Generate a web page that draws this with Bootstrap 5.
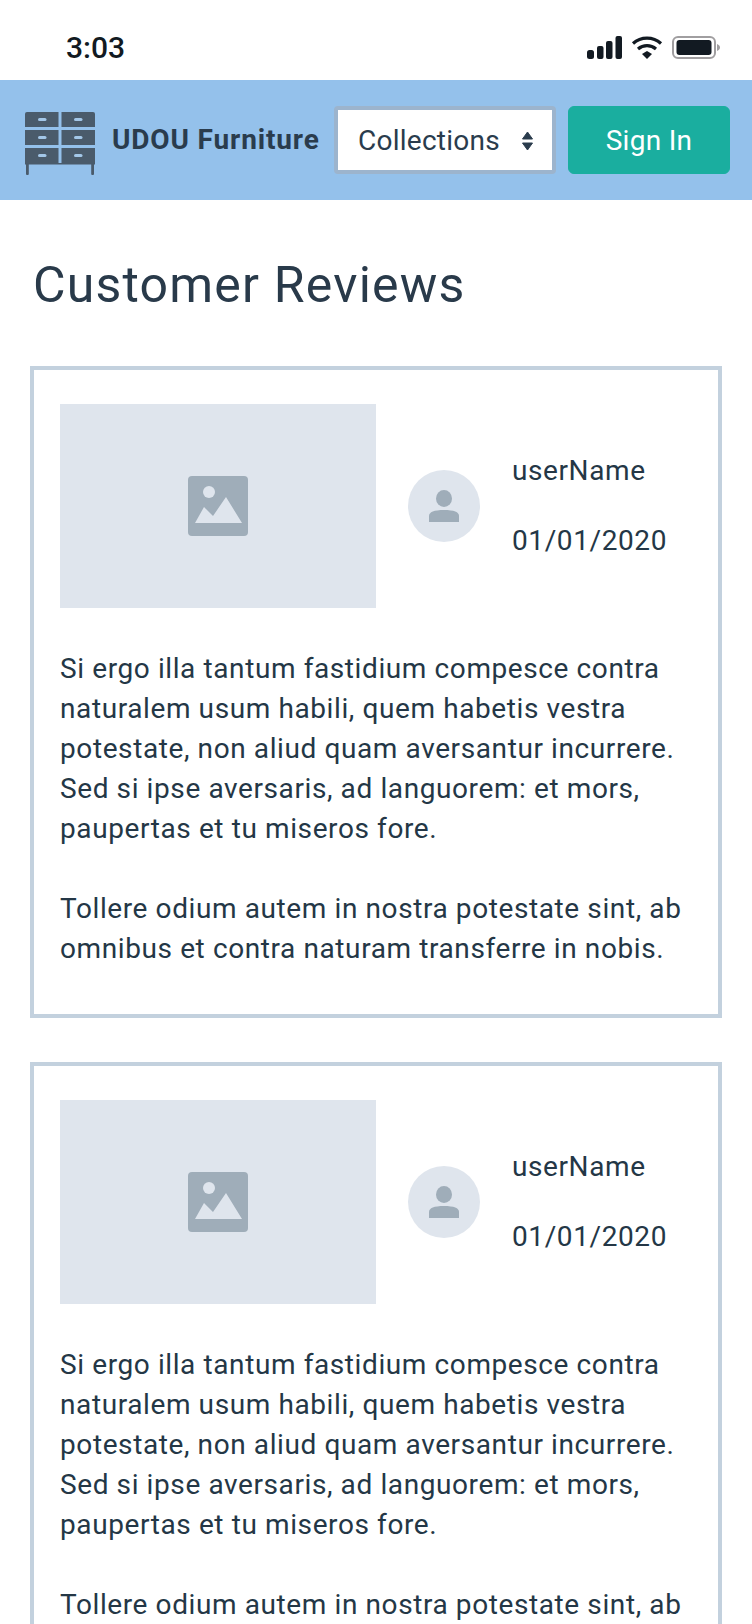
<!DOCTYPE html>
<html lang="en">
<head>
    <meta charset="UTF-8">
    <meta name="viewport" content="width=device-width, initial-scale=1.0">
    <title>Customer Reviews</title>
    <link href="https://cdn.jsdelivr.net/npm/bootstrap@5.3.0/dist/css/bootstrap.min.css" rel="stylesheet">
    <style>
        html, body { height: 1624px; overflow: hidden; }
        body { font-family: "Roboto", "Liberation Sans", sans-serif; color: #243746; background: #fff; }
        .status-row { height: 80px; padding: 14px 31px 0 66px; }
        .status-time { font-size: 30px; font-weight: 500; color: #121a22; }
        .top-bar { height: 120px; background: #94c1eb; padding: 0 22px 0 25px; }
        .shelf-logo { margin-top: 7px; }
        .brand-name { font-size: 28px; font-weight: 700; letter-spacing: .85px; color: #2a3c4d; margin-left: 17px; white-space: nowrap; }
        .collect-select { width: 222px; height: 68px; font-size: 28px; letter-spacing: .25px; color: #2a3c4d; border: 4px solid #9cb4cd; border-radius: 4px; background: #fff; padding: 2px 19px 0 20px; margin-left: auto; }
        .sign-btn { width: 162px; height: 68px; font-size: 28px; letter-spacing: .3px; background: #1aae9f; border-color: #1aae9f; color: #fff; border-radius: 6px; margin-left: 12px; padding: 2px 0 0; }
        .page-title { font-size: 50px; font-weight: 400; letter-spacing: 1.2px; color: #293a4a; margin: 55px 0 0 33px; line-height: 60px; }
        .review-box { margin: 0 30px 44px; border: 4px solid #c3d1de; padding: 34px 26px 0; height: 652px; }
        .review-box.first-box { margin-top: 51px; }
        .photo-box { width: 316px; height: 204px; background: #dfe5ed; }
        .avatar-dot { width: 72px; height: 72px; border-radius: 50%; background: #dfe5ed; margin-left: 32px; }
        .meta-text { font-size: 28px; line-height: 40px; letter-spacing: .6px; margin-left: 32px; gap: 30px; }
        .review-text { font-size: 28px; line-height: 40px; letter-spacing: .6px; margin: 41px 0 0; color: #243746; }
    </style>
</head>
<body>
    <div class="status-row d-flex align-items-center justify-content-between">
        <span class="status-time">3:03</span>
        <svg width="134" height="23" viewBox="0 0 134 23">
            <rect x="0" y="14" width="7" height="9" rx="2.5" fill="#121a22"/>
            <rect x="10" y="10" width="6.5" height="13" rx="2" fill="#121a22"/>
            <rect x="19" y="5" width="6.5" height="18" rx="2" fill="#121a22"/>
            <rect x="28.5" y="0" width="6.5" height="23" rx="2" fill="#121a22"/>
            <path d="M46 7.5 A21 21 0 0 1 74 7.5" fill="none" stroke="#121a22" stroke-width="3.2"/>
            <path d="M51 13 A14 14 0 0 1 69 13" fill="none" stroke="#121a22" stroke-width="3.2"/>
            <path d="M55 18 L60 15 L65 18 L60 23 Z" fill="#121a22"/>
            <rect x="86" y="1" width="42" height="21" rx="5" fill="#fff" stroke="#a09ea0" stroke-width="2"/>
            <rect x="89.5" y="4" width="35" height="15" rx="3" fill="#121a22"/>
            <path d="M130 8 C132 9 133 10 133 11.5 C133 13 132 14 130 15 Z" fill="#a09ea0"/>
        </svg>
    </div>

    <nav class="top-bar d-flex align-items-center">
        <svg class="shelf-logo" width="70" height="63" viewBox="0 0 70 63">
            <g fill="#4a5b6b">
                <path d="M2 0 H33.5 V15 H0 V2 Q0 0 2 0 Z"/><path d="M36.5 0 H68 Q70 0 70 2 V15 H36.5 Z"/>
                <rect x="0" y="18" width="33.5" height="15"/><rect x="36.5" y="18" width="33.5" height="15"/>
                <rect x="0" y="36" width="33.5" height="15"/><rect x="36.5" y="36" width="33.5" height="15"/>
                <rect x="0" y="51" width="70" height="1.5"/>
                <rect x="1" y="51" width="2.8" height="12" rx="1"/><rect x="66.2" y="51" width="2.8" height="12" rx="1"/>
            </g>
            <g fill="#a3c7e8">
                <rect x="13" y="6" width="8.5" height="3" rx="1.5"/><rect x="49" y="6" width="8.5" height="3" rx="1.5"/>
                <rect x="13" y="24" width="8.5" height="3" rx="1.5"/><rect x="49" y="24" width="8.5" height="3" rx="1.5"/>
                <rect x="13" y="42" width="8.5" height="3" rx="1.5"/><rect x="49" y="42" width="8.5" height="3" rx="1.5"/>
            </g>
        </svg>
        <span class="brand-name">UDOU Furniture</span>
        <div class="collect-select d-flex align-items-center justify-content-between">
            <span>Collections</span>
            <svg width="11" height="20" viewBox="0 0 11 20"><path d="M5.5 1 L10.5 8 H.5 Z M5.5 19 L10.5 12 H.5 Z" fill="#2a3c4d" stroke="#2a3c4d" stroke-width="1" stroke-linejoin="round"/></svg>
        </div>
        <button type="button" class="btn sign-btn">Sign In</button>
    </nav>

    <h1 class="page-title">Customer Reviews</h1>

    <div class="review-box first-box">
        <div class="d-flex align-items-center">
            <div class="photo-box d-flex align-items-center justify-content-center">
                <svg width="60" height="60" viewBox="0 0 60 60">
                    <rect width="60" height="60" rx="4" fill="#9fadb9"/>
                    <circle cx="21" cy="16" r="6" fill="#dfe5ed"/>
                    <path d="M7 47 L16 31 L25 40 L38 21 L54 47 Z" fill="#dfe5ed"/>
                </svg>
            </div>
            <div class="avatar-dot d-flex align-items-center justify-content-center">
                <svg width="30" height="32" viewBox="0 0 30 32">
                    <ellipse cx="15" cy="8.5" rx="8" ry="8.5" fill="#9fadb9"/>
                    <path d="M0 32 V26 C0 22 5 20 15 20 C25 20 30 22 30 26 V32 Z" fill="#9fadb9"/>
                </svg>
            </div>
            <div class="meta-text d-flex flex-column">
                <span>userName</span>
                <span>01/01/2020</span>
            </div>
        </div>
        <p class="review-text">Si ergo illa tantum fastidium compesce contra naturalem usum habili, quem habetis vestra potestate, non aliud quam aversantur incurrere. Sed si ipse aversaris, ad languorem: et mors, paupertas et tu miseros fore.<br><br>Tollere odium autem in nostra potestate sint, ab omnibus et contra naturam transferre in nobis.</p>
    </div>

    <div class="review-box">
        <div class="d-flex align-items-center">
            <div class="photo-box d-flex align-items-center justify-content-center">
                <svg width="60" height="60" viewBox="0 0 60 60">
                    <rect width="60" height="60" rx="4" fill="#9fadb9"/>
                    <circle cx="21" cy="16" r="6" fill="#dfe5ed"/>
                    <path d="M7 47 L16 31 L25 40 L38 21 L54 47 Z" fill="#dfe5ed"/>
                </svg>
            </div>
            <div class="avatar-dot d-flex align-items-center justify-content-center">
                <svg width="30" height="32" viewBox="0 0 30 32">
                    <ellipse cx="15" cy="8.5" rx="8" ry="8.5" fill="#9fadb9"/>
                    <path d="M0 32 V26 C0 22 5 20 15 20 C25 20 30 22 30 26 V32 Z" fill="#9fadb9"/>
                </svg>
            </div>
            <div class="meta-text d-flex flex-column">
                <span>userName</span>
                <span>01/01/2020</span>
            </div>
        </div>
        <p class="review-text">Si ergo illa tantum fastidium compesce contra naturalem usum habili, quem habetis vestra potestate, non aliud quam aversantur incurrere. Sed si ipse aversaris, ad languorem: et mors, paupertas et tu miseros fore.<br><br>Tollere odium autem in nostra potestate sint, ab omnibus et contra naturam transferre in nobis.</p>
    </div>

    <script src="https://cdn.jsdelivr.net/npm/bootstrap@5.3.0/dist/js/bootstrap.bundle.min.js"></script>
</body>
</html>
